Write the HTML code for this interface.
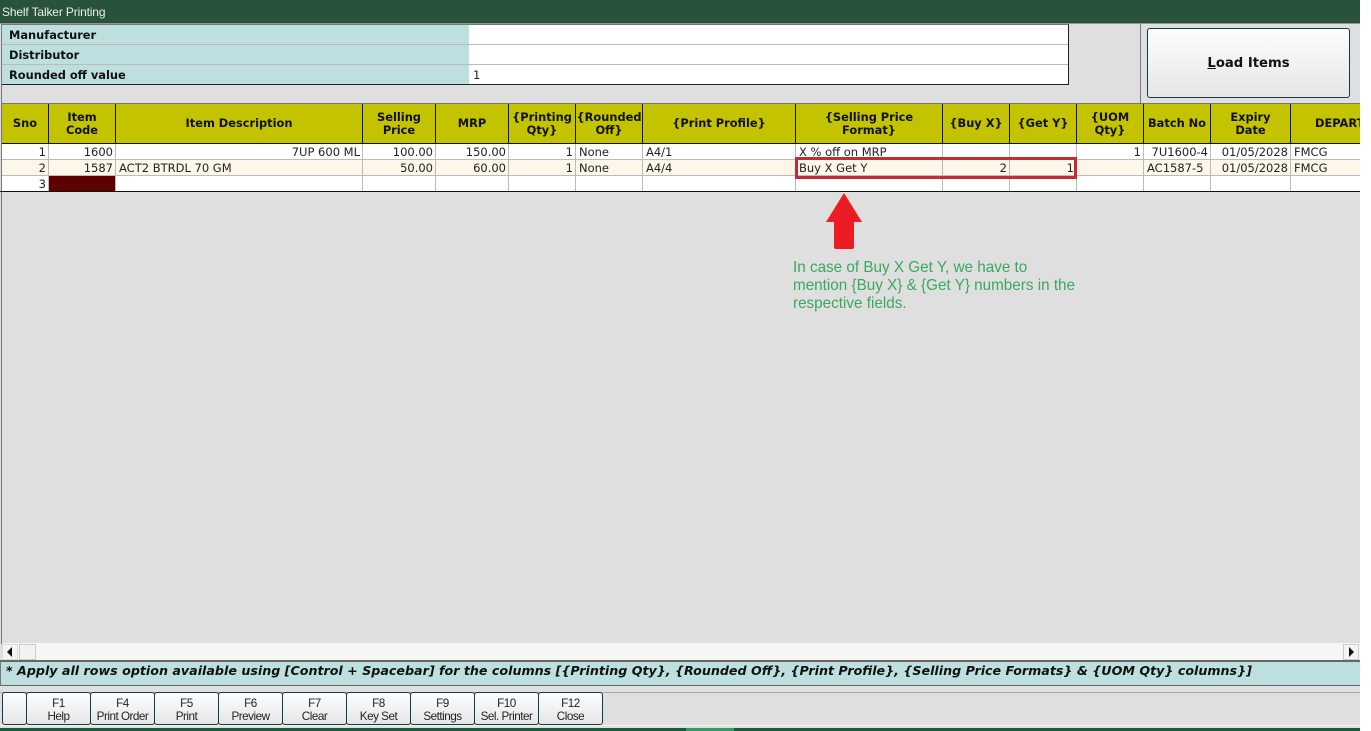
<!DOCTYPE html>
<html><head><meta charset="utf-8"><style>
html,body{margin:0;padding:0;background:#fff}
#p{position:relative;width:1360px;height:731px;background:#dfdfdf;overflow:hidden;font-family:"DejaVu Sans","Liberation Sans",sans-serif;font-size:11px;color:#222}
#p div{position:absolute;box-sizing:border-box}
.l{font-weight:bold;color:#111;left:9px;width:300px;height:16px;line-height:16px;font-size:11.4px}
.h{top:104px;height:39px;display:flex;align-items:center;justify-content:center;text-align:center;font-weight:bold;color:#111;line-height:13px;font-size:11.4px;white-space:nowrap}
.c{height:16px;line-height:17px;white-space:nowrap;font-size:11.5px;color:#222}
.r{text-align:right}
.vh{top:104px;width:1px;height:40px;background:#111}
.vr{top:144px;width:1px;height:47px;background:#bbb}
.b{top:692px;height:33px;border:1px solid #17364f;border-radius:3px;background:linear-gradient(#fdfdfd,#e6e6e6);font-family:"Liberation Sans",sans-serif;font-size:11.7px;letter-spacing:-.5px;text-align:center;line-height:13px;padding-top:4px;color:#222}
</style></head><body><div id="p">
<div style="left:0;top:0;width:1360px;height:23px;background:#29523a;color:#e8efe9;font-family:'Liberation Sans',sans-serif;font-size:12px;letter-spacing:-.15px;line-height:24px;padding-left:2px">Shelf Talker Printing</div>
<div style="left:0;top:23px;width:1360px;height:1px;background:#8a9a90"></div>

<div style="left:1px;top:24px;width:1068px;height:61px;background:#fff;border:1px solid #222;border-top-color:#777"></div>
<div style="left:2px;top:25px;width:467px;height:59px;background:#bedfdf"></div>
<div style="left:2px;top:44px;width:1066px;height:1px;background:#bbb"></div>
<div style="left:2px;top:64px;width:1066px;height:1px;background:#bbb"></div>
<div class="l" style="top:27px">Manufacturer</div>
<div class="l" style="top:47px">Distributor</div>
<div class="l" style="top:67px">Rounded off value</div>
<div class="c" style="left:473px;top:67px">1</div>

<div style="left:1140px;top:24px;width:1px;height:80px;background:#777"></div>
<div style="left:1147px;top:28px;width:203px;height:70px;border:1px solid #17364f;border-radius:3px;background:linear-gradient(#fdfdfd,#e6e6e6);text-align:center;line-height:70px;font-weight:bold;font-size:13.2px;color:#111"><u>L</u>oad Items</div>

<div style="left:1px;top:24px;width:1px;height:620px;background:#777"></div>

<div style="left:2px;top:104px;width:1358px;height:39px;background:#c3c300"></div>
<div style="left:2px;top:103px;width:1358px;height:1px;background:#777"></div>
<div style="left:2px;top:143px;width:1358px;height:1px;background:#111"></div>
<div style="left:2px;top:144px;width:1358px;height:47px;background:#fff"></div>
<div style="left:2px;top:160px;width:1358px;height:15px;background:#fdf7ea"></div>
<div style="left:2px;top:159px;width:1358px;height:1px;background:#bbb"></div>
<div style="left:2px;top:175px;width:1358px;height:1px;background:#bbb"></div>
<div style="left:0;top:191px;width:1360px;height:1px;background:#111"></div>
<div style="left:49px;top:176px;width:66px;height:15px;background:#5c0000"></div>

<div class="vh" style="left:48px"></div><div class="vh" style="left:115px"></div><div class="vh" style="left:362px"></div><div class="vh" style="left:435px"></div><div class="vh" style="left:508px"></div><div class="vh" style="left:575px"></div><div class="vh" style="left:642px"></div><div class="vh" style="left:795px"></div><div class="vh" style="left:942px"></div><div class="vh" style="left:1009px"></div><div class="vh" style="left:1076px"></div><div class="vh" style="left:1143px"></div><div class="vh" style="left:1210px"></div><div class="vh" style="left:1290px"></div>
<div class="vr" style="left:48px"></div><div class="vr" style="left:115px"></div><div class="vr" style="left:362px"></div><div class="vr" style="left:435px"></div><div class="vr" style="left:508px"></div><div class="vr" style="left:575px"></div><div class="vr" style="left:642px"></div><div class="vr" style="left:795px"></div><div class="vr" style="left:942px"></div><div class="vr" style="left:1009px"></div><div class="vr" style="left:1076px"></div><div class="vr" style="left:1143px"></div><div class="vr" style="left:1210px"></div><div class="vr" style="left:1290px"></div>

<div class="h" style="left:2px;width:46px">Sno</div>
<div class="h" style="left:49px;width:66px">Item<br>Code</div>
<div class="h" style="left:116px;width:246px">Item Description</div>
<div class="h" style="left:363px;width:72px">Selling<br>Price</div>
<div class="h" style="left:436px;width:72px">MRP</div>
<div class="h" style="left:509px;width:66px">{Printing<br>Qty}</div>
<div class="h" style="left:576px;width:66px">{Rounded<br>Off}</div>
<div class="h" style="left:643px;width:152px">{Print Profile}</div>
<div class="h" style="left:796px;width:146px">{Selling Price<br>Format}</div>
<div class="h" style="left:943px;width:66px">{Buy X}</div>
<div class="h" style="left:1010px;width:66px">{Get Y}</div>
<div class="h" style="left:1077px;width:66px">{UOM<br>Qty}</div>
<div class="h" style="left:1144px;width:66px">Batch No</div>
<div class="h" style="left:1211px;width:79px">Expiry<br>Date</div>
<div class="h" style="left:1315px;width:45px;justify-content:flex-start;overflow:hidden">DEPARTMENT</div>

<div class="c r" style="left:2px;width:44px;top:144px">1</div>
<div class="c r" style="left:49px;width:64px;top:144px">1600</div>
<div class="c r" style="left:116px;width:244px;top:144px">7UP 600 ML</div>
<div class="c r" style="left:363px;width:70px;top:144px">100.00</div>
<div class="c r" style="left:436px;width:70px;top:144px">150.00</div>
<div class="c r" style="left:509px;width:64px;top:144px">1</div>
<div class="c" style="left:579px;top:144px">None</div>
<div class="c" style="left:646px;top:144px">A4/1</div>
<div class="c" style="left:799px;top:144px">X % off on MRP</div>
<div class="c r" style="left:1077px;width:64px;top:144px">1</div>
<div class="c r" style="left:1144px;width:64px;top:144px">7U1600-4</div>
<div class="c r" style="left:1211px;width:77px;top:144px">01/05/2028</div>
<div class="c" style="left:1294px;top:144px">FMCG</div>

<div class="c r" style="left:2px;width:44px;top:160px">2</div>
<div class="c r" style="left:49px;width:64px;top:160px">1587</div>
<div class="c" style="left:119px;top:160px">ACT2 BTRDL 70 GM</div>
<div class="c r" style="left:363px;width:70px;top:160px">50.00</div>
<div class="c r" style="left:436px;width:70px;top:160px">60.00</div>
<div class="c r" style="left:509px;width:64px;top:160px">1</div>
<div class="c" style="left:579px;top:160px">None</div>
<div class="c" style="left:646px;top:160px">A4/4</div>
<div class="c" style="left:799px;top:160px">Buy X Get Y</div>
<div class="c r" style="left:943px;width:64px;top:160px">2</div>
<div class="c r" style="left:1010px;width:64px;top:160px">1</div>
<div class="c" style="left:1147px;top:160px">AC1587-5</div>
<div class="c r" style="left:1211px;width:77px;top:160px">01/05/2028</div>
<div class="c" style="left:1294px;top:160px">FMCG</div>
<div class="c r" style="left:2px;width:44px;top:176px">3</div>

<div style="left:795px;top:157px;width:282px;height:22px;border:3px solid #c22c38"></div>

<svg style="position:absolute;left:825px;top:192px" width="38" height="58" viewBox="0 0 38 58"><path d="M19 1 L37 30 L29 30 L29 55 Q29 57 27 57 L11 57 Q9 57 9 55 L9 30 L1 30 Z" fill="#ec1c24"/></svg>
<div style="left:793px;top:259px;width:300px;font-family:'Liberation Sans',sans-serif;font-size:15.25px;line-height:18px;color:#3aa95d;white-space:nowrap">In case of Buy X Get Y, we have to<br>mention {Buy X} &amp; {Get Y} numbers in the<br>respective fields.</div>

<div style="left:2px;top:643px;width:1358px;height:17px;background:#f6f6f6"></div>
<div style="left:2px;top:644px;width:16px;height:16px;background:#f4f4f4;border:1px solid #ddd"></div>
<svg style="position:absolute;left:6px;top:647px" width="8" height="10"><path d="M6 0 L1 5 L6 10 Z" fill="#111"/></svg>
<div style="left:19px;top:644px;width:17px;height:16px;background:#f2f2f2;border:1px solid #ccc"></div>
<div style="left:1343px;top:644px;width:16px;height:16px;background:#f4f4f4;border:1px solid #ccc"></div>
<svg style="position:absolute;left:1347px;top:647px" width="8" height="10"><path d="M2 0 L7 5 L2 10 Z" fill="#111"/></svg>

<div style="left:0;top:660px;width:1360px;height:26px;background:#bedfdf;border-top:2px solid #666;border-bottom:1px solid #666;border-left:1px solid #777;font-weight:bold;font-style:italic;font-size:12.67px;line-height:18px;padding-left:5px;color:#111;white-space:nowrap">* Apply all rows option available using [Control + Spacebar] for the columns [{Printing Qty}, {Rounded Off}, {Print Profile}, {Selling Price Formats} &amp; {UOM Qty} columns}]</div>
<div style="left:0;top:692px;width:1360px;height:1px;background:#aaa"></div>

<div class="b" style="left:2px;width:25px"></div>
<div class="b" style="left:26px;width:65px">F1<br>Help</div>
<div class="b" style="left:90px;width:65px">F4<br>Print Order</div>
<div class="b" style="left:154px;width:65px">F5<br>Print</div>
<div class="b" style="left:218px;width:65px">F6<br>Preview</div>
<div class="b" style="left:282px;width:65px">F7<br>Clear</div>
<div class="b" style="left:346px;width:65px">F8<br>Key Set</div>
<div class="b" style="left:410px;width:65px">F9<br>Settings</div>
<div class="b" style="left:474px;width:65px">F10<br>Sel. Printer</div>
<div class="b" style="left:538px;width:65px">F12<br>Close</div>

<div style="left:0;top:725px;width:1360px;height:1px;background:#f4f4f4"></div>
<div style="left:0;top:728px;width:1360px;height:3px;background:#1e5a3c"></div>
<div style="left:686px;top:728px;width:48px;height:3px;background:#2f9e66"></div>
</div></body></html>
